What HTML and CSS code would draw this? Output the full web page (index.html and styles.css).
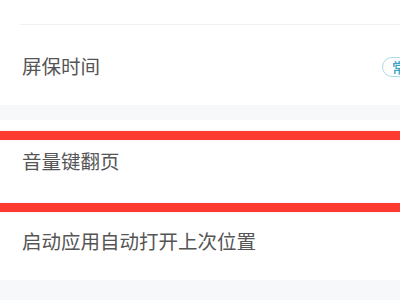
FILE: index.html
```html
<!DOCTYPE html>
<html lang="zh">
<head>
<meta charset="utf-8">
<link rel="stylesheet" href="styles.css">
</head>
<body>
<div class="group">
  <div class="row-top"></div>
  <div class="row">
    <span class="label">屏保时间</span>
    <span class="badge">常亮</span>
  </div>
</div>
<div class="group second">
  <div class="row">
    <span class="label">音量键翻页</span>
  </div>
  <div class="row">
    <span class="label">启动应用自动打开上次位置</span>
  </div>
  <div class="mark"></div>
</div>
</body>
</html>
```
FILE: styles.css
```css
html, body {
  margin: 0;
  padding: 0;
}
body {
  width: 400px;
  height: 300px;
  overflow: hidden;
  background: #f7f8fa;
  font-family: "Noto Sans CJK SC", "Noto Sans", sans-serif;
}
.group {
  background: #ffffff;
  position: relative;
}
.second {
  margin-top: 15px;
}
.row-top {
  height: 25px;
  position: relative;
}
.row-top::after {
  content: "";
  position: absolute;
  left: 20px;
  right: 0;
  bottom: 0;
  height: 1px;
  background: #f0f0f0;
}
.row {
  height: 80px;
  display: flex;
  align-items: center;
  justify-content: space-between;
  padding-left: 22px;
  box-sizing: border-box;
  overflow: hidden;
}
.label {
  font-size: 19.5px;
  color: #555555;
  line-height: 1;
  letter-spacing: 0;
  padding-top: 2px;
}
.badge {
  flex: none;
  margin-right: -52px;
  height: 20px;
  width: 70px;
  box-sizing: border-box;
  border: 1px solid #a9dce4;
  border-radius: 10px;
  color: #39a3c6;
  font-size: 14px;
  font-weight: 500;
  line-height: 18px;
  padding-left: 9px;
  margin-top: 3px;
}
.mark {
  position: absolute;
  left: -20px;
  right: -20px;
  top: 11px;
  height: 81px;
  border: 9px solid #fd3b30;
  box-sizing: border-box;
  box-shadow: 0 0 1px #ffb0a8, inset 0 0 1px #ffb0a8;
}
```
